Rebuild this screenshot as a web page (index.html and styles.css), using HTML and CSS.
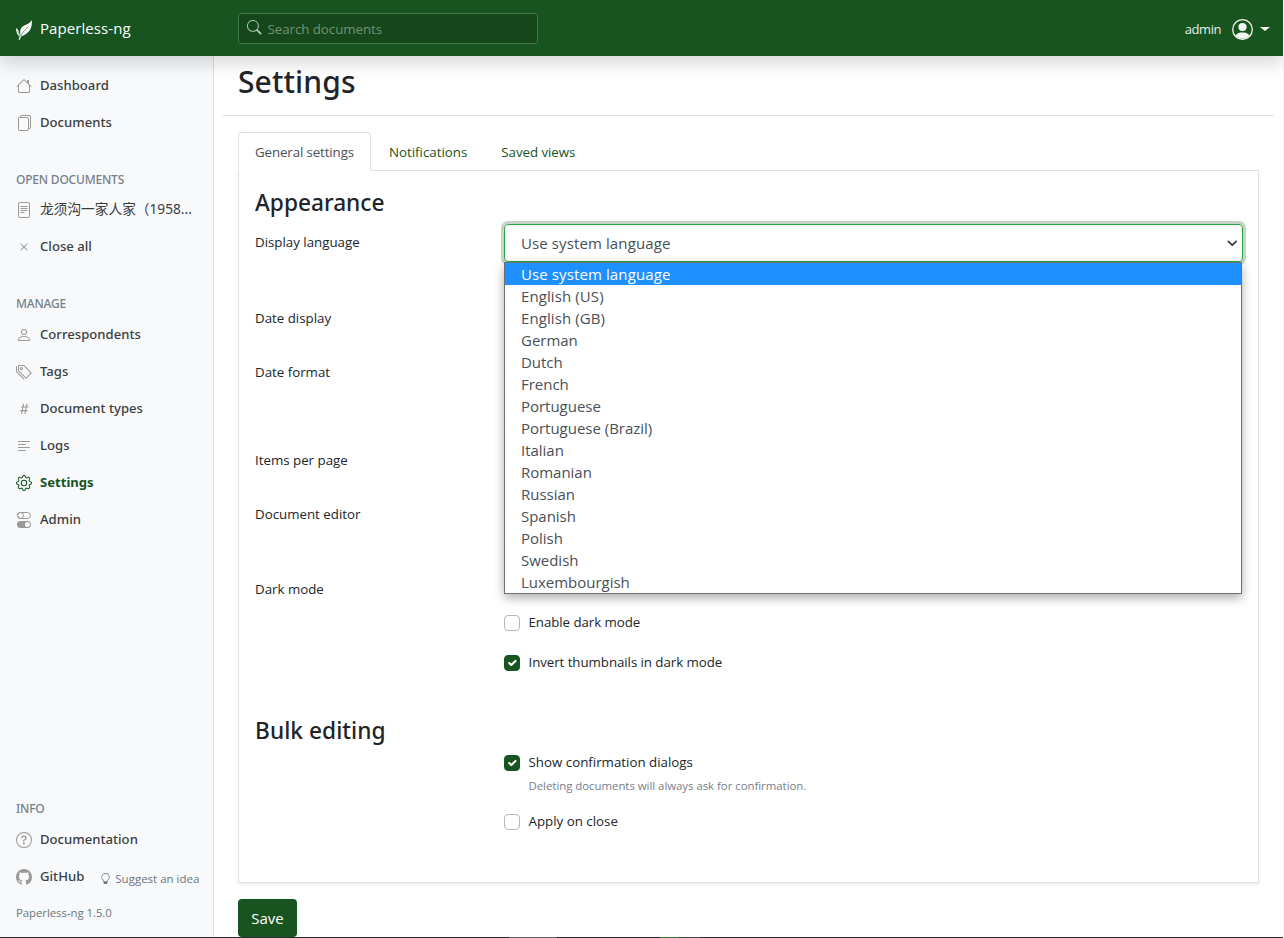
FILE: index.html
```html
<!DOCTYPE html>
<html lang="en">
<head>
<meta charset="utf-8">
<title>Paperless-ng</title>
<link rel="stylesheet" href="styles.css">
</head>
<body>
<header class="navbar">
  <a class="brand">
    <svg class="leaf" viewBox="0 0 16 20" fill="#fff"><path d="M15.8 0C16.400 6 15 12.600 6.800 15.700L5.300 16.300 3.600 20 2.600 19.600 3.600 16.600C1.200 15 .3 12.600.1 9.200L.2 8C1.600 9.100 2.900 10.500 3.300 13L4 14.800 4.500 15.500C3.900 12 4.200 9.500 5.600 7.600 8 4.500 13.800 4.400 15.800 0Z"/><path d="M12.500 6.500C9 9.500 6 13 4.500 16.500M1.500 11C2.500 12.800 3.200 14.200 3.800 16" fill="none" stroke="#17541f" stroke-width=".55"/></svg>
    Paperless-ng
  </a>
  <div class="search">
    <svg class="bi" viewBox="0 0 16 16" fill="currentColor"><path d="M11.742 10.344a6.500 6.500 0 1 0-1.397 1.398h-.001c.03.04.062.078.098.115l3.850 3.850a1 1 0 0 0 1.415-1.414l-3.850-3.850a1.007 1.007 0 0 0-.115-.1zM12 6.500a5.500 5.500 0 1 1-11 0 5.500 5.500 0 0 1 11 0z"/></svg>
    <span>Search documents</span>
  </div>
  <div class="user">
    <span>admin</span>
    <svg class="avatar" viewBox="0 0 21 21"><circle cx="10.500" cy="10.500" r="9.800" fill="none" stroke="#f4f6f4" stroke-width="1.300"/><circle cx="10.500" cy="8" r="4.100" fill="#f4f6f4"/><path d="M3.400 16.600C5.300 14 7.700 13.500 10.500 13.500s5.200.5 7.100 3.100A9.600 9.600 0 0 1 3.400 16.600Z" fill="#f4f6f4"/></svg>
    <i class="caret"></i>
  </div>
</header>
<div class="shell">
  <nav class="sidebar">
    <div class="group">
      <a class="item"><svg class="bi" viewBox="0 0 16 16" fill="currentColor"><path fill-rule="evenodd" d="M2 13.500V7h1v6.500a.5.5 0 0 0 .5.5h9a.5.5 0 0 0 .5-.5V7h1v6.500a1.500 1.500 0 0 1-1.500 1.500h-9A1.500 1.500 0 0 1 2 13.500zm11-11V6l-2-2V2.500a.5.5 0 0 1 .5-.5h1a.5.5 0 0 1 .5.5z"/><path fill-rule="evenodd" d="M7.293 1.500a1 1 0 0 1 1.414 0l6.647 6.646a.5.5 0 0 1-.708.708L8 2.207 1.354 8.854a.5.5 0 1 1-.708-.708L7.293 1.500z"/></svg>Dashboard</a>
      <a class="item"><svg class="bi" viewBox="0 0 16 16" fill="currentColor"><path d="M13 0H6a2 2 0 0 0-2 2 2 2 0 0 0-2 2v10a2 2 0 0 0 2 2h7a2 2 0 0 0 2-2 2 2 0 0 0 2-2V2a2 2 0 0 0-2-2zm0 13V4a2 2 0 0 0-2-2H5a1 1 0 0 1 1-1h7a1 1 0 0 1 1 1v10a1 1 0 0 1-1 1zM3 4a1 1 0 0 1 1-1h7a1 1 0 0 1 1 1v10a1 1 0 0 1-1 1H4a1 1 0 0 1-1-1V4z"/></svg>Documents</a>
    </div>
    <h6 class="group-title">OPEN DOCUMENTS</h6>
    <div class="group">
      <a class="item cjk"><svg class="bi" viewBox="0 0 16 16" fill="currentColor"><path d="M5 4a.5.5 0 0 0 0 1h6a.5.5 0 0 0 0-1H5zm-.5 2.500A.5.5 0 0 1 5 6h6a.5.5 0 0 1 0 1H5a.5.5 0 0 1-.5-.5zM5 8a.5.5 0 0 0 0 1h6a.5.5 0 0 0 0-1H5zm0 2a.5.5 0 0 0 0 1h3a.5.5 0 0 0 0-1H5z"/><path d="M2 2a2 2 0 0 1 2-2h8a2 2 0 0 1 2 2v12a2 2 0 0 1-2 2H4a2 2 0 0 1-2-2V2zm10-1H4a1 1 0 0 0-1 1v12a1 1 0 0 0 1 1h8a1 1 0 0 0 1-1V2a1 1 0 0 0-1-1z"/></svg><span>龙须沟一家人家（1958...</span></a>
      <a class="item"><svg class="bi" viewBox="0 0 16 16" fill="currentColor"><path d="M4.646 4.646a.5.5 0 0 1 .708 0L8 7.293l2.646-2.647a.5.5 0 0 1 .708.708L8.707 8l2.647 2.646a.5.5 0 0 1-.708.708L8 8.707l-2.646 2.647a.5.5 0 0 1-.708-.708L7.293 8 4.646 5.354a.5.5 0 0 1 0-.708z"/></svg>Close all</a>
    </div>
    <h6 class="group-title manage">MANAGE</h6>
    <div class="group">
      <a class="item"><svg class="bi" viewBox="0 0 16 16" fill="currentColor"><path d="M8 8a3 3 0 1 0 0-6 3 3 0 0 0 0 6zm2-3a2 2 0 1 1-4 0 2 2 0 0 1 4 0zm4 8c0 1-1 1-1 1H3s-1 0-1-1 1-4 6-4 6 3 6 4zm-1-.004c-.001-.246-.154-.986-.832-1.664C11.516 10.680 10.289 10 8 10c-2.290 0-3.516.680-4.168 1.332-.678.678-.83 1.418-.832 1.664h10z"/></svg>Correspondents</a>
      <a class="item"><svg class="bi" viewBox="0 0 16 16" fill="currentColor"><path d="M3 2v4.586l7 7L14.586 9l-7-7H3zM2 2a1 1 0 0 1 1-1h4.586a1 1 0 0 1 .707.293l7 7a1 1 0 0 1 0 1.414l-4.586 4.586a1 1 0 0 1-1.414 0l-7-7A1 1 0 0 1 2 6.586V2z"/><path d="M5.500 5a.5.5 0 1 1 0-1 .5.5 0 0 1 0 1zm0 1a1.500 1.500 0 1 0 0-3 1.500 1.500 0 0 0 0 3zM1 7.086a1 1 0 0 0 .293.707L8.750 15.250l-.043.043a1 1 0 0 1-1.414 0l-7-7A1 1 0 0 1 0 7.586V3a1 1 0 0 1 1-1v5.086z"/></svg>Tags</a>
      <a class="item"><svg class="bi" viewBox="0 0 16 16" fill="currentColor"><path d="M8.390 12.648a1.320 1.320 0 0 0-.015.180c0 .305.210.508.500.508.266 0 .492-.172.555-.477l.554-2.703h1.204c.421 0 .617-.234.617-.547 0-.312-.188-.530-.617-.530h-.985l.516-2.524h1.265c.430 0 .618-.227.618-.547 0-.313-.188-.524-.618-.524h-1.046l.476-2.304a1.060 1.060 0 0 0 .016-.164.510.510 0 0 0-.516-.516.540.540 0 0 0-.539.430l-.523 2.554H7.617l.477-2.304c.008-.040.015-.118.015-.164a.512.512 0 0 0-.523-.516.539.539 0 0 0-.531.430L6.530 5.484H5.414c-.430 0-.617.220-.617.532 0 .312.187.539.617.539h.906l-.515 2.523H4.609c-.421 0-.609.219-.609.531 0 .313.188.547.610.547h.976l-.516 2.492c-.008.040-.015.125-.015.180 0 .305.210.508.500.508.265 0 .492-.172.554-.477l.555-2.703h2.242l-.515 2.492zm-1-6.109h2.266l-.515 2.563H6.859l.532-2.563z"/></svg>Document types</a>
      <a class="item"><svg class="bi" viewBox="0 0 16 16" fill="currentColor"><path fill-rule="evenodd" d="M2 12.500a.5.5 0 0 1 .5-.5h7a.5.5 0 0 1 0 1h-7a.5.5 0 0 1-.5-.5zm0-3a.5.5 0 0 1 .5-.5h11a.5.5 0 0 1 0 1h-11a.5.5 0 0 1-.5-.5zm0-3a.5.5 0 0 1 .5-.5h7a.5.5 0 0 1 0 1h-7a.5.5 0 0 1-.5-.5zm0-3a.5.5 0 0 1 .5-.5h11a.5.5 0 0 1 0 1h-11a.5.5 0 0 1-.5-.5z"/></svg>Logs</a>
      <a class="item active"><svg class="bi" viewBox="0 0 16 16" fill="currentColor"><path d="M8 4.754a3.246 3.246 0 1 0 0 6.492 3.246 3.246 0 0 0 0-6.492zM5.754 8a2.246 2.246 0 1 1 4.492 0 2.246 2.246 0 0 1-4.492 0z"/><path d="M9.796 1.343c-.527-1.790-3.065-1.790-3.592 0l-.094.319a.873.873 0 0 1-1.255.520l-.292-.160c-1.640-.892-3.433.902-2.540 2.541l.159.292a.873.873 0 0 1-.520 1.255l-.319.094c-1.790.527-1.790 3.065 0 3.592l.319.094a.873.873 0 0 1 .520 1.255l-.160.292c-.892 1.640.901 3.434 2.541 2.540l.292-.159a.873.873 0 0 1 1.255.520l.094.319c.527 1.790 3.065 1.790 3.592 0l.094-.319a.873.873 0 0 1 1.255-.520l.292.160c1.640.893 3.434-.902 2.540-2.541l-.159-.292a.873.873 0 0 1 .520-1.255l.319-.094c1.790-.527 1.790-3.065 0-3.592l-.319-.094a.873.873 0 0 1-.520-1.255l.160-.292c.893-1.640-.902-3.433-2.541-2.540l-.292.159a.873.873 0 0 1-1.255-.520l-.094-.319zm-2.633.283c.246-.835 1.428-.835 1.674 0l.094.319a1.873 1.873 0 0 0 2.693 1.115l.291-.160c.764-.415 1.600.420 1.184 1.185l-.159.292a1.873 1.873 0 0 0 1.116 2.692l.318.094c.835.246.835 1.428 0 1.674l-.319.094a1.873 1.873 0 0 0-1.115 2.693l.160.291c.415.764-.420 1.600-1.185 1.184l-.291-.159a1.873 1.873 0 0 0-2.693 1.116l-.094.318c-.246.835-1.428.835-1.674 0l-.094-.319a1.873 1.873 0 0 0-2.692-1.115l-.292.160c-.764.415-1.600-.420-1.184-1.185l.159-.291A1.873 1.873 0 0 0 1.945 8.930l-.319-.094c-.835-.246-.835-1.428 0-1.674l.319-.094A1.873 1.873 0 0 0 3.060 4.377l-.160-.292c-.415-.764.420-1.600 1.185-1.184l.292.159a1.873 1.873 0 0 0 2.692-1.115l.094-.319z"/></svg>Settings</a>
      <a class="item"><svg class="bi" viewBox="0 0 16 16"><rect x="1.500" y=".5" width="13" height="6" rx="3" fill="none" stroke="currentColor"/><circle cx="4.500" cy="3.500" r="3" fill="none" stroke="currentColor"/><path fill="currentColor" fill-rule="evenodd" d="M4.500 9h7a3.500 3.500 0 1 1 0 7h-7a3.500 3.500 0 1 1 0-7zm7 6a2.500 2.500 0 1 0 0-5 2.500 2.500 0 0 0 0 5z"/></svg>Admin</a>
    </div>
    <h6 class="group-title info">INFO</h6>
    <div class="group">
      <a class="item"><svg class="bi" viewBox="0 0 16 16" fill="currentColor"><path d="M8 15A7 7 0 1 1 8 1a7 7 0 0 1 0 14zm0 1A8 8 0 1 0 8 0a8 8 0 0 0 0 16z"/><path d="M5.255 5.786a.237.237 0 0 0 .241.247h.825c.138 0 .248-.113.266-.250.090-.656.540-1.134 1.342-1.134.686 0 1.314.343 1.314 1.168 0 .635-.374.927-.965 1.371-.673.489-1.206 1.060-1.168 1.987l.003.217a.250.250 0 0 0 .250.246h.811a.250.250 0 0 0 .250-.250v-.105c0-.718.273-.927 1.010-1.486.609-.463 1.244-.977 1.244-2.056 0-1.511-1.276-2.241-2.673-2.241-1.267 0-2.655.590-2.750 2.286zm1.557 5.763c0 .533.425.927 1.010.927.609 0 1.028-.394 1.028-.927 0-.552-.420-.940-1.029-.940-.584 0-1.009.388-1.009.940z"/></svg>Documentation</a>
      <div class="links">
        <a class="item"><svg class="bi" viewBox="0 0 16 16" fill="currentColor"><path d="M8 0C3.580 0 0 3.580 0 8c0 3.540 2.290 6.530 5.470 7.590.4.070.550-.170.550-.380 0-.190-.010-.820-.010-1.490-2.010.370-2.530-.490-2.690-.940-.090-.230-.480-.940-.820-1.130-.280-.150-.680-.520-.010-.530.630-.010 1.080.580 1.230.820.720 1.210 1.870.870 2.330.660.070-.520.280-.870.510-1.070-1.780-.200-3.640-.890-3.640-3.950 0-.870.310-1.590.820-2.150-.080-.200-.360-1.020.080-2.120 0 0 .670-.210 2.200.820.640-.180 1.320-.270 2-.270.680 0 1.360.090 2 .270 1.530-1.040 2.200-.820 2.200-.820.440 1.100.160 1.920.080 2.120.510.560.820 1.270.820 2.150 0 3.070-1.870 3.750-3.650 3.950.290.250.540.730.540 1.480 0 1.070-.010 1.930-.010 2.200 0 .210.150.460.550.380A8.012 8.012 0 0 0 16 8c0-4.420-3.580-8-8-8z"/></svg>GitHub</a>
        <a class="idea"><svg class="bulb" viewBox="0 0 16 16" fill="currentColor"><path d="M2 6a6 6 0 1 1 10.174 4.310c-.203.196-.359.400-.453.619l-.762 1.769A.5.5 0 0 1 10.500 13a.5.5 0 0 1 0 1 .5.5 0 0 1 0 1l-.224.447a1 1 0 0 1-.894.553H6.618a1 1 0 0 1-.894-.553L5.500 15a.5.5 0 0 1 0-1 .5.5 0 0 1 0-1 .5.5 0 0 1-.460-.302l-.761-1.770a1.964 1.964 0 0 0-.453-.618A5.984 5.984 0 0 1 2 6zm6-5a5 5 0 0 0-3.479 8.592c.263.254.514.564.676.941L5.830 12h4.342l.632-1.467c.162-.377.413-.687.676-.941A5 5 0 0 0 8 1z"/></svg>Suggest an idea</a>
      </div>
      <span class="version">Paperless-ng 1.5.0</span>
    </div>
  </nav>
  <main class="main">
    <div class="title-bar"><h1 class="title">Settings</h1></div>
    <div class="tabs">
      <a class="tab selected">General settings</a>
      <a class="tab notif">Notifications</a>
      <a class="tab">Saved views</a>
    </div>
    <section class="card">
      <h4 class="heading">Appearance</h4>
      <div class="row lang">
        <label class="label">Display language</label>
        <div class="select-wrap">
          <div class="select"><span>Use system language</span>
            <svg class="chevron" viewBox="0 0 16 16"><path d="M2 5l6 6 6-6" fill="none" stroke="#343a40" stroke-width="2.600" stroke-linecap="round" stroke-linejoin="round"/></svg>
          </div>
          <ul class="menu">
            <li class="option current">Use system language</li>
            <li class="option english">English (US)</li>
            <li class="option english">English (GB)</li>
            <li class="option">German</li>
            <li class="option">Dutch</li>
            <li class="option">French</li>
            <li class="option">Portuguese</li>
            <li class="option">Portuguese (Brazil)</li>
            <li class="option">Italian</li>
            <li class="option">Romanian</li>
            <li class="option">Russian</li>
            <li class="option">Spanish</li>
            <li class="option">Polish</li>
            <li class="option">Swedish</li>
            <li class="option">Luxembourgish</li>
          </ul>
        </div>
      </div>
      <div class="row short"><label class="label">Date display</label></div>
      <div class="row tall"><label class="label">Date format</label></div>
      <div class="row short"><label class="label">Items per page</label></div>
      <div class="row lang"><label class="label">Document editor</label></div>
      <div class="row dark">
        <label class="label">Dark mode</label>
        <div class="checks">
          <label class="check"><i class="box"></i>Enable dark mode</label>
          <label class="check"><i class="box on"><svg viewBox="0 0 20 20"><path d="M6 10l3 3 6-6" fill="none" stroke="#fff" stroke-width="3" stroke-linecap="round" stroke-linejoin="round"/></svg></i>Invert thumbnails in dark mode</label>
        </div>
      </div>
      <h4 class="heading bulk">Bulk editing</h4>
      <div class="row">
        <span class="label"></span>
        <div class="bulk-checks">
          <label class="check wide"><i class="box on"><svg viewBox="0 0 20 20"><path d="M6 10l3 3 6-6" fill="none" stroke="#fff" stroke-width="3" stroke-linecap="round" stroke-linejoin="round"/></svg></i>Show confirmation dialogs</label>
          <small class="hint">Deleting documents will always ask for confirmation.</small>
          <label class="check wide"><i class="box"></i>Apply on close</label>
        </div>
      </div>
    </section>
    <button class="save">Save</button>
  </main>
</div>
<footer class="taskbar"><i class="seg one"></i><i class="seg two"></i><i class="seg three"></i></footer>
</body>
</html>
```
FILE: styles.css
```css
* { box-sizing: border-box; }
body {
  margin: 0;
  height: 938px;
  overflow: hidden;
  display: flex;
  flex-direction: column;
  background: #fff;
  border-right: 1px solid #f0f0f0;
  font: 400 13.3px/21px "Open Sans", "Noto Sans", sans-serif;
  color: #212529;
  white-space: nowrap;
}
h1, h4, h6, ul { margin: 0; padding: 0; list-style: none; }
svg { display: block; flex: none; }

.navbar {
  flex: none;
  height: 56px;
  display: flex;
  align-items: center;
  background: #17541f;
  box-shadow: 0 8px 16px rgba(0, 0, 0, .15);
  z-index: 2;
  color: #fff;
}
.brand {
  width: 238px;
  padding: 0 0 0 16px;
  display: flex;
  align-items: center;
  gap: 8px;
  font-size: 15px;
  letter-spacing: .08px;
}
.leaf { width: 16px; height: 20px; margin-top: 3px; }
.search {
  width: 300px;
  height: 31px;
  padding: 2px 8px 0;
  display: flex;
  align-items: center;
  gap: 6px;
  border: 1px solid #457649;
  border-radius: 3px;
  background: #15471b;
  color: #739276;
}
.search .bi { width: 14.5px; height: 14.5px; margin-top: -3px; color: #b9c8bb; }
.search span { letter-spacing: -.04px; }
.user {
  margin-left: auto;
  padding-right: 13px;
  display: flex;
  align-items: center;
  color: #e8eee9;
}
.user span { font-size: 13px; letter-spacing: -.45px; margin-top: 2px; }
.avatar { width: 21px; height: 21px; margin: 2px 7px 0 11px; }
.caret { border: 5px solid transparent; border-top: 4.500px solid #f4f6f4; border-bottom: 0; margin-top: 2px; }

.shell { flex: 1; min-height: 0; display: flex; }
.sidebar {
  width: 214px;
  flex: none;
  padding: 11px 0 0 16px;
  display: flex;
  flex-direction: column;
  background: #f8f9fb;
  border-right: 1px solid #dcdddf;
}
.item {
  height: 37px;
  display: flex;
  align-items: center;
  gap: 8px;
  font: 500 13.1px/21px "Noto Sans", sans-serif;
  letter-spacing: .02px;
  color: #3a3d40;
}
.item .bi { width: 16px; height: 16px; color: #999; }
.cjk { font-family: "Noto Sans", "Noto Sans CJK SC", sans-serif; font-size: 13.7px; font-weight: 400; letter-spacing: 0; }
.cjk span { padding-bottom: 2px; }
.active, .item.active .bi { color: #17541f; }
.active { font-weight: 700; letter-spacing: 0; }
.group-title {
  padding-top: 29px;
  margin-bottom: 1px;
  font: 500 12px/20px "Noto Sans", sans-serif;
  letter-spacing: -.2px;
  color: #76808a;
}
.group-title.manage { margin-bottom: 2px; }
.group-title.info { margin-top: auto; padding-top: 0; margin-bottom: 2px; }
.links { display: flex; gap: 16px; }
.idea { display: flex; align-items: center; gap: 4px; font-size: 11.5px; margin-top: 3px; color: #6c757d; }
.bulb { width: 11px; height: 11px; }
.version { display: block; height: 42px; line-height: 35px; font-size: 11.4px; letter-spacing: -.05px; color: #6c757d; }

.main { flex: 1; padding: 0 24px 0 24px; display: flex; flex-direction: column; }
.title-bar {
  height: 60px;
  flex: none;
  margin: 0 -15px 16px;
  padding-left: 15px;
  border-bottom: 1px solid #dee2e6;
}
.title { font: 500 30px/52px "Noto Sans", sans-serif; letter-spacing: .1px; }
.tabs { display: flex; height: 39px; flex: none; margin-bottom: -1px; z-index: 1; }
.tab { padding: 9px 16px; color: #17541f; border: 1px solid transparent; letter-spacing: -.04px; }
.notif { letter-spacing: 0; padding-left: 17px; }
.selected {
  width: 133px;
  letter-spacing: -.11px;
  color: #495057;
  background: #fff;
  border-color: #dee2e6 #dee2e6 #fff;
  border-radius: 4px 4px 0 0;
}
.card {
  height: 713px;
  flex: none;
  padding: 15px 15px 0 16px;
  border: 1px solid #dee2e6;
  box-shadow: 0 2px 4px rgba(0, 0, 0, .075);
}
.heading { height: 38px; font: 500 22.7px/34px "Noto Sans", sans-serif; }
.row { display: flex; }
.label { width: 249px; line-height: 37px; flex: none; }
.lang { height: 76px; }
.short { height: 54px; }
.tall { height: 88px; }
.dark { height: 143px; margin-top: -1px; }
.select-wrap { position: relative; flex: 1; }
.select {
  height: 38px;
  padding: 0 5px 0 16px;
  display: flex;
  align-items: center;
  justify-content: space-between;
  border: 1px solid #28a745;
  border-radius: 4px;
  box-shadow: 0 0 0 3px #c5d4c7;
  font-size: 15px;
  letter-spacing: .11px;
  color: #495057;
}
.chevron { width: 10.5px; height: 10.5px; }
.menu {
  position: absolute;
  top: 38px;
  left: 0;
  right: 1px;
  z-index: 3;
  border: 1px solid #707070;
  background: #fff;
  box-shadow: 0 4px 10px rgba(0, 0, 0, .32);
}
.option { height: 22px; padding-left: 16px; font-size: 15px; line-height: 23px; color: #495057; letter-spacing: -.02px; }
.english { letter-spacing: .1px; }
.current { background: #1e90ff; color: #fff; letter-spacing: .11px; }
.checks { padding-top: 41px; display: flex; flex-direction: column; gap: 19px; }
.check { display: flex; align-items: center; gap: 8.5px; letter-spacing: -.06px; }
.wide { letter-spacing: .01px; }
.box { width: 16px; height: 16px; flex: none; border: 1px solid #b1b8bf; border-radius: 4px; background: #fff; position: relative; top: .5px; }
.on { border-color: #17541f; background: #17541f; }
.bulk { letter-spacing: .04px; }
.bulk-checks { display: flex; flex-direction: column; }
.hint { height: 38px; padding: 2px 0 0 24.5px; font-size: 11.4px; letter-spacing: -.02px; color: #76808a; }
.save {
  align-self: flex-start;
  flex: none;
  width: 59px;
  height: 38px;
  margin-top: 16px;
  padding: 0;
  border: 0;
  border-radius: 4px;
  background: #17541f;
  color: #fff;
  font: 400 15px/38px "Open Sans", sans-serif;
}
.taskbar { height: 1px; flex: none; margin-right: -1px; display: flex; background: #2b2b2b; z-index: 4; }
.seg { height: 1px; }
.one { margin-left: 509px; width: 48px; background: #606060; }
.two { margin-left: 103px; width: 19px; background: #3c7a3c; }
.three { width: 21px; background: #444; }
```
